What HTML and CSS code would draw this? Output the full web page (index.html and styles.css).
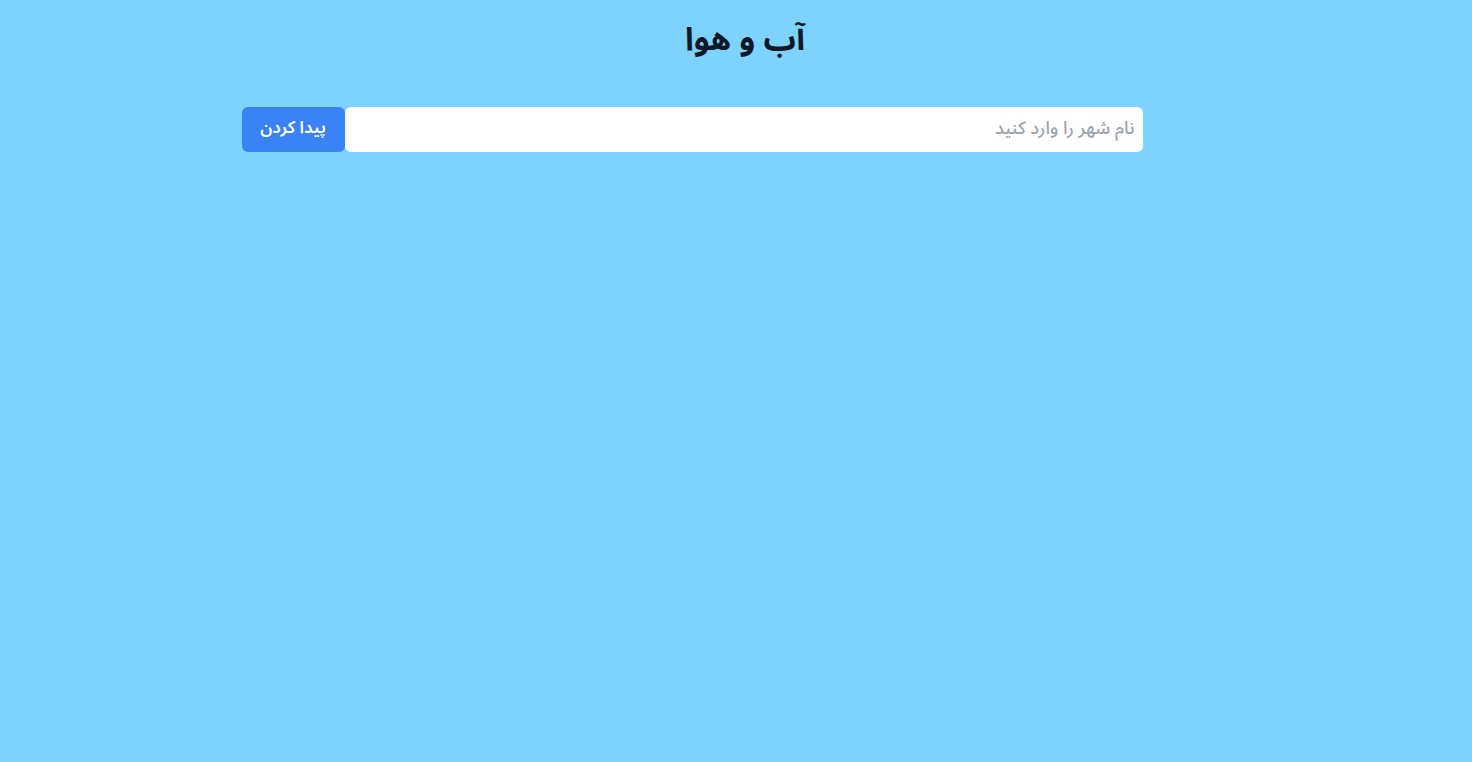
FILE: index.html
```html
<!DOCTYPE html>
<html lang="fa" dir="rtl">
<head>
<meta charset="utf-8">
<title>آب و هوا</title>
<link rel="stylesheet" href="styles.css">
</head>
<body>
<main class="page">
  <h1 class="title">آب و هوا</h1>
  <form class="search">
    <input class="search-input" type="text" placeholder="نام شهر را وارد کنید">
    <button class="search-btn" type="button">پیدا کردن</button>
  </form>
</main>
</body>
</html>
```

FILE: styles.css
```css
html, body {
  margin: 0;
  padding: 0;
  height: 100%;
}
body {
  background: #7dd3fc;
  font-family: "Noto Sans Arabic", "Noto Naskh Arabic", "Noto Sans", "DejaVu Sans", sans-serif;
}
.page {
  display: flex;
  flex-direction: column;
  align-items: center;
}
.title {
  margin: 15px 0 0 18px;
  font-size: 32px;
  font-weight: 700;
  color: #111827;
  line-height: 50px;
}
.search {
  display: flex;
  width: 901px;
  margin: 42px 88px 0 0;
}
.search-input {
  flex: 1;
  height: 45px;
  box-sizing: border-box;
  border: none;
  border-radius: 6px;
  background: #fff;
  padding: 0 8px 4px 8px;
  font-family: inherit;
  font-size: 18px;
  font-weight: 500;
  color: #111827;
  outline: none;
}
.search-input::placeholder {
  color: #9ca3af;
}
.search-btn {
  width: 103px;
  height: 45px;
  box-sizing: border-box;
  border: none;
  border-radius: 6px;
  background: #3b82f6;
  color: #fff;
  padding: 0 0 4px 0;
  font-family: inherit;
  font-size: 17px;
  font-weight: 600;
}
```
